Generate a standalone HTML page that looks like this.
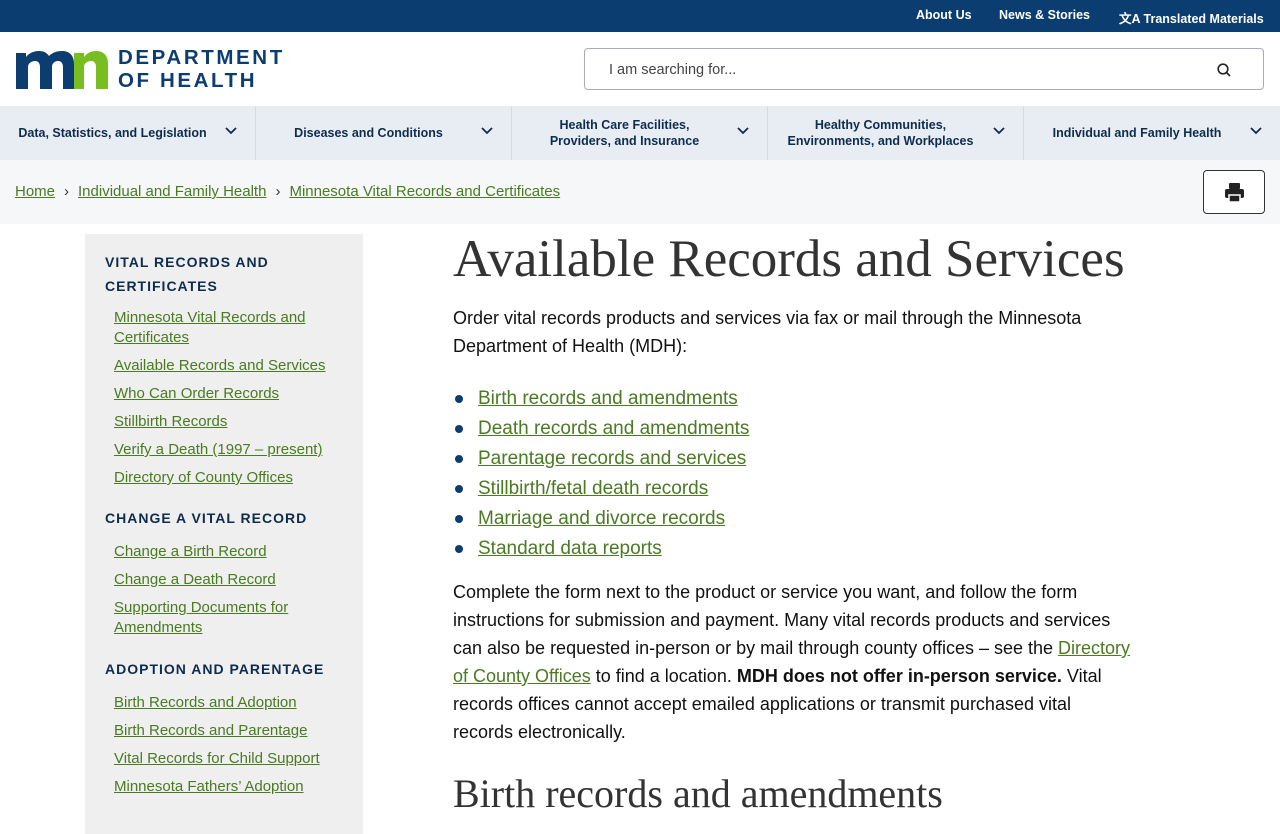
<!DOCTYPE html>
<html><head><meta charset="utf-8"><style>
*{box-sizing:border-box;margin:0;padding:0}
body{width:1280px;height:800px;overflow:hidden;font-family:"Liberation Sans",sans-serif;background:#fff;color:#111}
a{color:#4a7a22;text-decoration:underline}
.top{height:32px;background:#0b3d70;color:#fff;font-weight:bold;font-size:12.5px;position:relative}
.top span{position:absolute;top:8px}
.hdr{height:74px;position:relative}
.search{position:absolute;left:584px;top:16px;width:680px;height:42px;border:1px solid #aab;border-radius:4px;font-size:14.5px;color:#444;padding:13px 24px}
.nav{height:54px;background:#e8edf3;display:flex}
.nav div{width:256px;border-right:1px solid #d5dbe3;position:relative;font-weight:bold;font-size:12.5px;color:#0d2c4e;display:flex;align-items:center;justify-content:center;text-align:center;line-height:16px;padding-right:30px}
.nav div svg{position:absolute;right:18px;top:21px}
.bc{height:64px;background:#f6f7f9;position:relative;font-size:15px}
.bc .l{position:absolute;top:23px;left:15px}
.bc .l b{color:#333;margin:0 9px;font-weight:normal}
.print{position:absolute;left:1203px;top:10px;width:62px;height:44px;border:1px solid #333;border-radius:4px;background:#fff}
.side{position:absolute;left:85px;top:234px;width:278px;height:600px;background:#efefef;padding:16px 20px}
.side h4{font-size:14px;letter-spacing:1px;color:#0d2c4e;line-height:24px;margin:0 0 12px}
.side a{display:block;font-size:15px;line-height:20px;margin:0 0 8px 9px}
.main{position:absolute;left:453px;top:226px;width:680px}
h1{font-family:"Liberation Serif",serif;font-weight:normal;font-size:53px;color:#333;line-height:66px;white-space:nowrap}
p{font-size:18px;line-height:28px;margin:10px 0 0;color:#111}
ul{list-style:none;margin:24px 0 14px}
li{font-size:19px;line-height:30px;padding-left:25px;position:relative}
li:before{content:"";position:absolute;left:2px;top:11px;width:8px;height:8px;border-radius:50%;background:#0b3d70}
h2{font-family:"Liberation Serif",serif;font-weight:normal;font-size:40px;color:#333;margin-top:24px;white-space:nowrap}
</style></head><body>
<div class="top"><span style="left:916px">About Us</span><span style="left:999px">News &amp; Stories</span><span style="left:1119px">文A Translated Materials</span></div>
<div class="hdr">
<svg style="position:absolute;left:16px;top:19px" width="92" height="38" viewBox="0 0 92 38"><path d="M0 38V2h10v4c3-4 8-6 13-6 5 0 8 2 10 5 3-3 7-5 13-5 8 0 12 5 12 13v25H47V16c0-4-2-6-5-6s-6 2-6 6v22H24V16c0-4-2-6-5-6s-7 2-7 6v22z" fill="#0b3d70"/><path d="M58 38V2h10v4c3-4 7-6 12-6 8 0 12 5 12 13v25H80V16c0-4-2-6-5-6s-7 2-7 6v22z" fill="#78be21"/></svg>
<div style="position:absolute;left:118px;top:14px;color:#0b3d70;font-weight:bold;font-size:20.5px;letter-spacing:2.6px;line-height:23px">DEPARTMENT<br>OF HEALTH</div>
<div class="search">I am searching for...<svg style="position:absolute;right:32px;top:14px" width="14" height="14" viewBox="0 0 14 14"><circle cx="6" cy="6" r="4.8" fill="none" stroke="#222" stroke-width="1.6"/><path d="M9.5 9.5L13 13" stroke="#222" stroke-width="1.6"/></svg></div>
</div>
<div class="nav">
<div>Data, Statistics, and Legislation<svg width="12" height="8"><path d="M1 1l5 5 5-5" fill="none" stroke="#0d2c4e" stroke-width="1.8"/></svg></div>
<div>Diseases and Conditions<svg width="12" height="8"><path d="M1 1l5 5 5-5" fill="none" stroke="#0d2c4e" stroke-width="1.8"/></svg></div>
<div>Health Care Facilities,<br>Providers, and Insurance<svg width="12" height="8"><path d="M1 1l5 5 5-5" fill="none" stroke="#0d2c4e" stroke-width="1.8"/></svg></div>
<div>Healthy Communities,<br>Environments, and Workplaces<svg width="12" height="8"><path d="M1 1l5 5 5-5" fill="none" stroke="#0d2c4e" stroke-width="1.8"/></svg></div>
<div style="border:none">Individual and Family Health<svg width="12" height="8"><path d="M1 1l5 5 5-5" fill="none" stroke="#0d2c4e" stroke-width="1.8"/></svg></div>
</div>
<div class="bc"><div class="l"><a>Home</a><b>›</b><a>Individual and Family Health</a><b>›</b><a>Minnesota Vital Records and Certificates</a></div>
<div class="print"><svg style="position:absolute;left:20px;top:11px" width="21" height="21" viewBox="0 0 21 21"><rect x="5" y="1" width="11" height="6" rx="1" fill="#222"/><rect x="1" y="7" width="19" height="9" rx="2" fill="#222"/><rect x="5" y="13" width="11" height="7" fill="#222" stroke="#fff" stroke-width="1.5"/></svg></div></div>
<div class="side">
<h4 style="margin-bottom:10px">VITAL RECORDS AND CERTIFICATES</h4>
<a>Minnesota Vital Records and Certificates</a><a>Available Records and Services</a><a>Who Can Order Records</a><a>Stillbirth Records</a><a>Verify a Death (1997 – present)</a><a>Directory of County Offices</a>
<h4 style="margin-top:18px">CHANGE A VITAL RECORD</h4>
<a>Change a Birth Record</a><a>Change a Death Record</a><a>Supporting Documents for Amendments</a>
<h4 style="margin-top:19px">ADOPTION AND PARENTAGE</h4>
<a>Birth Records and Adoption</a><a>Birth Records and Parentage</a><a>Vital Records for Child Support</a><a>Minnesota Fathers’ Adoption</a>
</div>
<div class="main">
<h1>Available Records and Services</h1>
<p style="margin-top:12px">Order vital records products and services via fax or mail through the Minnesota Department of Health (MDH):</p>
<ul><li><a>Birth records and amendments</a></li><li><a>Death records and amendments</a></li><li><a>Parentage records and services</a></li><li><a>Stillbirth/fetal death records</a></li><li><a>Marriage and divorce records</a></li><li><a>Standard data reports</a></li></ul>
<p>Complete the form next to the product or service you want, and follow the form instructions for submission and payment. Many vital records products and services can also be requested in-person or by mail through county offices – see the <a>Directory of County Offices</a> to find a location. <b>MDH does not offer in-person service.</b> Vital records offices cannot accept emailed applications or transmit purchased vital records electronically.</p>
<h2>Birth records and amendments</h2>
</div>
</body></html>
